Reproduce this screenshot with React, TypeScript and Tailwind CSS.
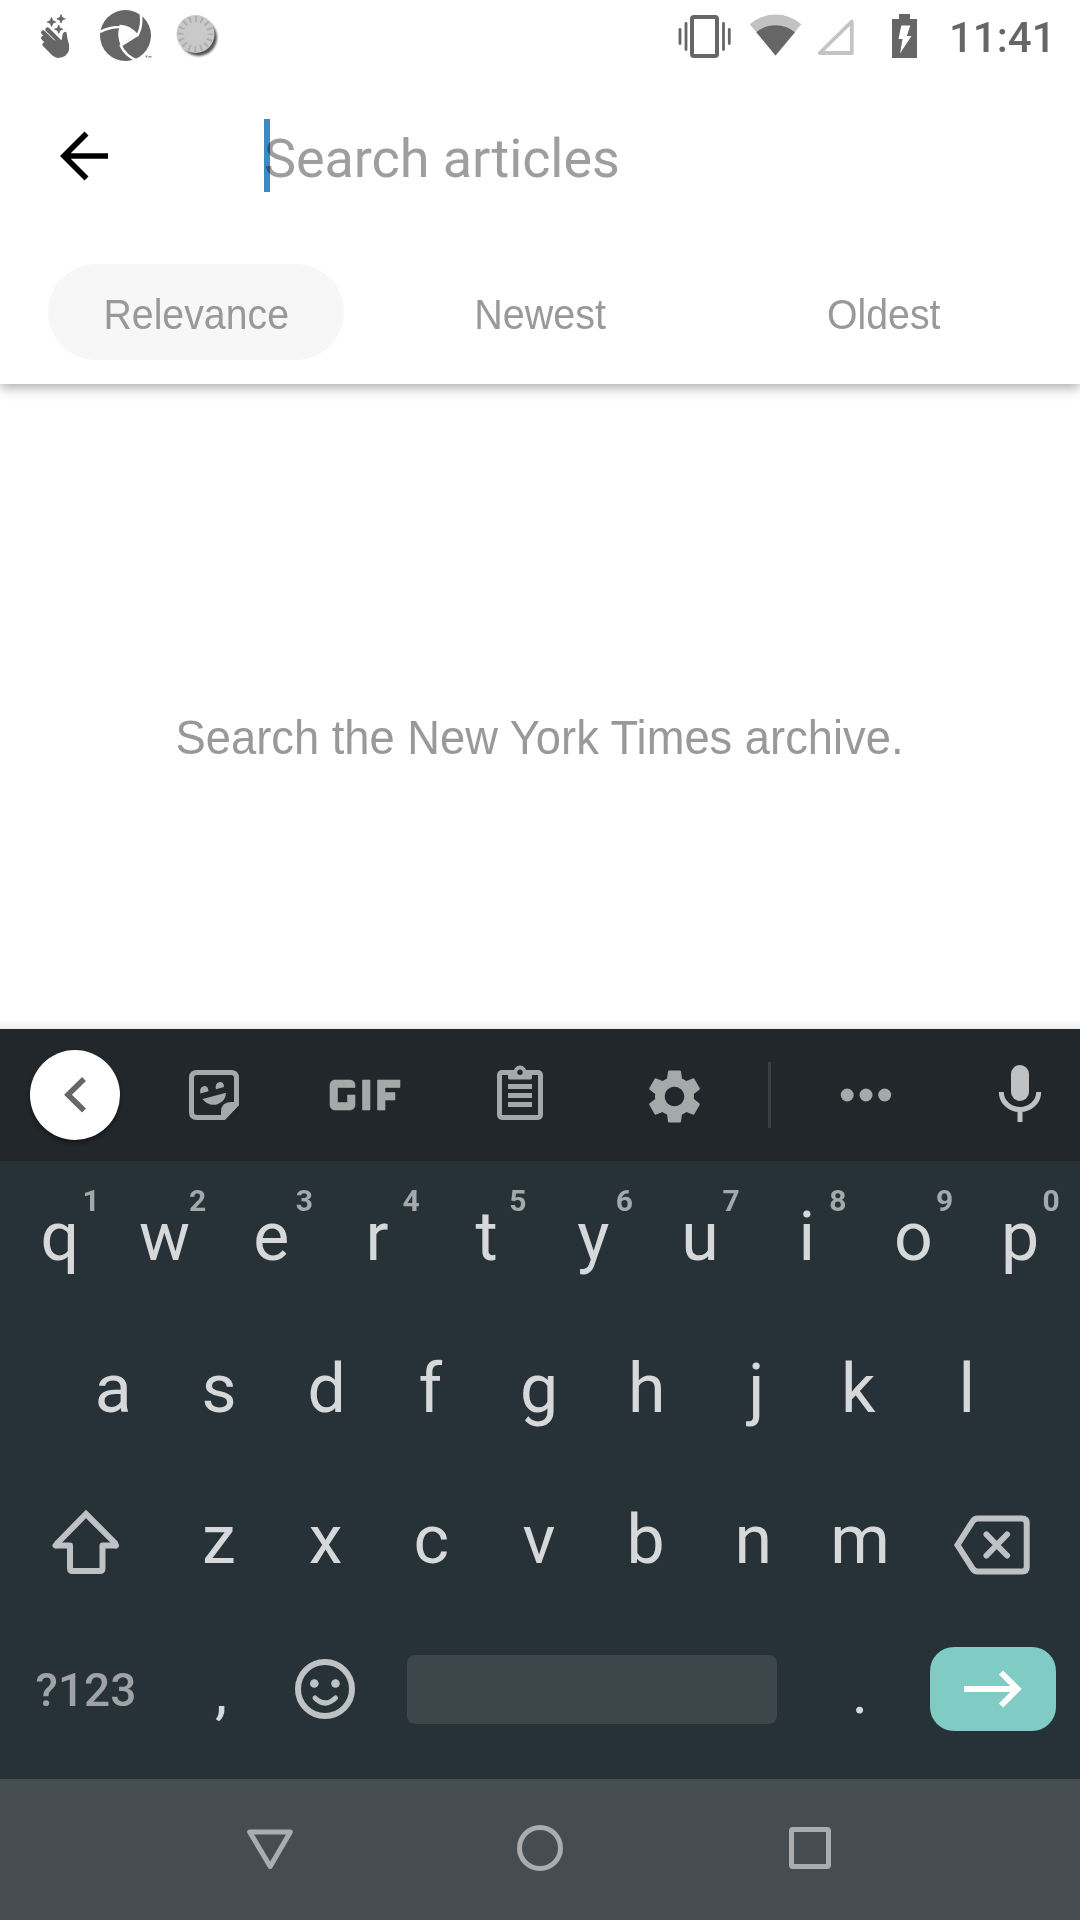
import React from 'react';
import { MdGif, MdSettings } from 'react-icons/md';

function StatusBar() {
  return (
    <div className="flex h-[72px] w-full shrink-0 items-start text-[#666]">
      {/* waving hand */}
      <svg className="ml-9 h-[72px] w-9 shrink-0" viewBox="36 0 36 72" fill="currentColor">
        <path d="M51.500 17.500l1.300 3.200l3 1.300l-3 1.300l-1.300 3.200l-1.300-3.200l-3-1.300l3-1.300z M61 14.500l1.200 3l3 1.300l-3 1.300l-1.200 3l-1.200-3l-3-1.300l3-1.300z M58.700 25l1.200 3l3 1.200l-3 1.200l-1.200 3l-1.200-3l-3-1.200l3-1.200z" stroke="currentColor" strokeWidth=".8" />
        <path d="M47.500 29.500L60 42 M43.200 32.500L57 46 M43.200 38L55 50 M44.500 44.500L54 54" stroke="currentColor" strokeWidth="4.400" strokeLinecap="round" />
        <path d="M49 39L60.500 41.500Q62.500 39 62.500 34.500Q64 30.500 66.500 32.500Q67.500 40 69 44V50Q67 57.500 58 58Q54 57.500 50 52.500L46 46z" />
      </svg>
      {/* aperture logo */}
      <svg className="ml-7 h-[72px] w-[52px] shrink-0" viewBox="100 0 52 72">
        <circle cx="125.500" cy="35.500" r="25.500" fill="currentColor" />
        <path d="M119.500 26.500Q131 26 137.500 35Q129 38 120.500 45Q116.500 35 119.500 26.500z" fill="#fff" />
        <path d="M100 32Q109 27 120 27 M119.500 26Q129 25.500 138 36 M137 36Q143 26 140.500 12 M138 34.500Q133 38 120 46 M120.500 45Q125 56 138 61" fill="none" stroke="#fff" strokeWidth="2.500" />
        <path d="M134 61L143 56L152 60V66H134z" fill="#fff" />
        <path d="M145 56h3m-1.500 0v2m2.500 0v-2l1 1l1-1v2" stroke="currentColor" strokeWidth=".6" fill="none" />
      </svg>
      {/* dial */}
      <svg className="ml-[23px] h-[72px] w-[50px] shrink-0 overflow-visible" viewBox="175 0 50 72">
        <defs>
          <filter id="soft" x="-20%" y="-20%" width="150%" height="150%"><feGaussianBlur stdDeviation="1.300" /></filter>
        </defs>
        <circle cx="198.500" cy="37.500" r="18.500" fill="#555" filter="url(#soft)" />
        <circle cx="195.500" cy="34" r="19" fill="#c9c9c9" />
        <circle cx="195.500" cy="34" r="15" fill="none" stroke="#aeaeae" strokeWidth="6" strokeDasharray="2 3.890" strokeDashoffset="1" />
      </svg>
      {/* vibrate */}
      <svg className="ml-[451px] h-[72px] w-14 shrink-0" viewBox="676 0 56 72" fill="none" stroke="currentColor">
        <rect x="692" y="17" width="25" height="39" rx="2" strokeWidth="4" />
        <path d="M680 29.500V43.500 M686 23.500V49.500 M723.500 23.500V49.500 M729.300 29.500V43.500" strokeWidth="2.800" strokeLinecap="round" />
      </svg>
      {/* wifi */}
      <svg className="ml-4 h-[72px] w-14 shrink-0" viewBox="748 0 56 72">
        <path d="M775.500 55.500L749.800 24.300Q761 14.500 775.500 14.500Q790 14.500 801.300 24.300z" fill="#c2c2c2" />
        <path d="M775.500 55.500L756.300 32.200Q764.500 25.200 775.500 25.200Q786.500 25.200 795 32.200z" fill="currentColor" />
      </svg>
      {/* no signal */}
      <svg className="ml-3 h-[72px] w-10 shrink-0" viewBox="816 0 40 72">
        <path d="M851.800 21.500V53H819.800z" fill="none" stroke="#c4c4c4" strokeWidth="3.800" strokeLinejoin="round" />
      </svg>
      {/* battery charging */}
      <svg className="ml-9 h-[72px] w-[25px] shrink-0" viewBox="892 0 25 72">
        <path d="M892 19h7v-5h11v5h7v39h-25z" fill="currentColor" />
        <path d="M901.300 25.500h9l-3.500 10.500h4.700L900 53.500L902.500 39h-4z" fill="#fff" />
      </svg>
      <span className="ml-8 mt-[2px] text-[42px] font-medium leading-[72px]">11:41</span>
    </div>
  );
}

function SearchHeader() {
  return (
    <header className="flex h-[384px] shrink-0 flex-col bg-white shadow-[0_3px_12px_rgba(0,0,0,0.36)]">
      <StatusBar />
      <div className="flex h-[168px] items-center">
        <svg className="ml-[60px] h-[50px] w-[49px]" viewBox="60 131 49 50" fill="none" stroke="#000" strokeWidth="5.600">
          <path d="M108 156H64 M86.500 133.500L64 156L86.500 178.500" />
        </svg>
        <div className="relative ml-[155px] text-[54px] leading-[72px] text-[#9e9e9e]">
          <span className="relative top-[3px] tracking-[-0.08px]">Search articles</span>
          <i className="absolute left-0 top-[-1px] h-[73px] w-1.5 bg-[#3b8bbf] mix-blend-multiply" />
        </div>
      </div>
      <nav className="mt-6 flex h-24 items-center px-12 font-['Liberation_Sans',sans-serif] text-[42px] text-[#999]">
        <button className="h-24 w-[296px] rounded-full bg-[#f7f7f7] pt-[5px]">
          <span className="inline-block scale-x-[0.935]">Relevance</span>
        </button>
        <button className="ml-12 h-24 w-[296px] pt-[5px]">
          <span className="inline-block scale-x-[0.94]">Newest</span>
        </button>
        <button className="ml-12 h-24 w-[296px] pt-[5px]">
          <span className="inline-block scale-x-[0.935]">Oldest</span>
        </button>
      </nav>
    </header>
  );
}

function Toolbar() {
  return (
    <div className="flex h-[132px] shrink-0 items-center bg-[#22272b] text-[#a5a9aa]">
      <div className="ml-[30px] flex h-[90px] w-[90px] items-center justify-center rounded-full bg-white shadow-[0_3px_4px_rgba(0,0,0,0.4)]">
        <svg className="h-10 w-[30px]" viewBox="60.500 1075 30 40" fill="none" stroke="#666" strokeWidth="5.500">
          <path d="M84.500 1079L68.500 1094.700L84.500 1110.500" />
        </svg>
      </div>
      {/* sticker */}
      <svg className="ml-[69px] h-[50px] w-[50px]" viewBox="0 0 50 50">
        <path d="M8 2.500H42Q47.500 2.500 47.500 8V34L34 47.500H8Q2.500 47.500 2.500 42V8Q2.500 2.500 8 2.500z" fill="none" stroke="currentColor" strokeWidth="5" />
        <path d="M50 32V35L36 50H32V42Q32 32 42 32z" fill="currentColor" />
        <path d="M11.500 23.500Q10 17.500 14.500 16.200Q19 15.500 19.500 21.200z M27 19.300Q25.500 13.200 30.500 12Q35 11.500 35 17z M13.500 29L37 22.800Q36.500 31.500 28.500 34.300Q19 36.500 13.500 29z" fill="currentColor" />
      </svg>
      <MdGif className="ml-[66px] h-[120px] w-[120px] [&>path:last-child]:stroke-current [&>path:last-child]:[stroke-width:0.12px]" />
      {/* clipboard */}
      <svg className="ml-[72px] h-[60px] w-[46px]" viewBox="497 1065 46 60" fill="none" stroke="currentColor">
        <rect x="499.500" y="1072.500" width="41" height="45" rx="2.500" strokeWidth="5" />
        <path d="M508 1074H532V1078Q532 1079.500 530 1079.500H510Q508 1079.500 508 1078z M513 1074A7 8.500 0 0 1 527 1074z" fill="currentColor" stroke="none" />
        <circle cx="520" cy="1072.300" r="2.700" fill="#22272b" stroke="none" />
        <path d="M508 1086.500H532 M508 1095.500H532 M508 1104.500H532" strokeWidth="5" />
      </svg>
      <MdSettings className="ml-[98.500px] mt-[3px] h-[65px] w-[65px]" />
      <div className="ml-[61.500px] h-[66px] w-[3px] bg-[#3b4043]" />
      <svg className="ml-[69px] h-4 w-[52px]" viewBox="840 1087.500 52 16" fill="currentColor">
        <circle cx="847.200" cy="1095.500" r="6.500" />
        <circle cx="866" cy="1095.500" r="6.500" />
        <circle cx="884.700" cy="1095.500" r="6.500" />
      </svg>
      {/* microphone */}
      <svg className="ml-[107px] h-[60px] w-[42px] text-[#bfc1c2]" viewBox="999 1065 42 60">
        <rect x="1011" y="1065" width="18" height="36" rx="9" fill="currentColor" />
        <path d="M1001.300 1092A18.700 17.500 0 0 0 1038.700 1092 M1020 1110V1122" fill="none" stroke="currentColor" strokeWidth="5" />
      </svg>
    </div>
  );
}

// Optical centring of single glyphs inside their key.
const nudges: Record<string, string> = {
  w: '-left-[2px]',
  e: '-left-[2px]',
  r: '-left-[3px]',
  s: '-left-[1px]',
  f: '-left-[3px]',
  g: '-left-[1px]',
  j: 'left-[3px]',
  k: '-left-[2px]',
  c: '-left-[1px]',
  m: 'left-[1px]',
  n: 'left-[1px]',
};

function Key({ label, hint }: { label: string; hint?: string }) {
  return (
    <button className="relative h-full w-[106.700px] shrink-0 text-center text-[68px] leading-[152.500px] text-[#d6d8d9]">
      <span className={'relative ' + (nudges[label] ?? 'left-0')}>{label}</span>
      {hint && (
        <span className="absolute left-[74.500px] top-[24px] w-5 text-center text-[30px] font-bold leading-8 text-[#a4a9ab]">
          {hint}
        </span>
      )}
    </button>
  );
}

function Keyboard() {
  return (
    <section className="flex h-[618px] shrink-0 flex-col bg-[#273238]">
      <div className="flex h-[151.500px] pl-[6.500px]">
        {'qwertyuiop'.split('').map((c, i) => (
          <Key key={c} label={c} hint={String((i + 1) % 10)} />
        ))}
      </div>
      <div className="flex h-[151.500px] pl-[60px]">
        {'asdfghjkl'.split('').map((c) => (
          <Key key={c} label={c} />
        ))}
      </div>
      <div className="flex h-[151.500px] items-center text-[#bfc2c5]">
        <svg className="ml-[50px] h-[72px] w-[72px] shrink-0" viewBox="50 1504 72 72" fill="none" stroke="currentColor" strokeWidth="6" strokeLinejoin="round">
          <path strokeLinejoin="miter" d="M56.500 1544L86 1514L116 1544" />
          <path d="M56 1545.500H70V1568Q70 1571 72.500 1571H100Q102.500 1571 102.500 1568V1545.500H116.500" />
          <path d="M55.500 1545.500L57 1544 M116 1545.500L115 1544" strokeLinecap="round" />
        </svg>
        <div className="ml-[43.500px] flex h-full">
          {'zxcvbnm'.split('').map((c) => (
            <Key key={c} label={c} />
          ))}
        </div>
        <svg className="ml-[41px] mt-1 h-[66px] w-[78px] shrink-0" viewBox="953 1509 78 66" fill="none" stroke="currentColor" strokeWidth="6" strokeLinejoin="round">
          <path strokeLinejoin="miter" d="M957.500 1545L972.500 1521.500Q974.500 1518.500 977.500 1518.500H1022Q1026.700 1518.500 1026.700 1523V1567Q1026.700 1571.500 1022 1571.500H977.500Q974.500 1571.500 972.500 1568.500z" />
          <path strokeLinecap="round" d="M986.500 1534.500L1007 1555.500 M1007 1534.500L986.500 1555.500" />
        </svg>
      </div>
      <div className="flex h-[146px] items-center">
        <button className="w-[166px] pl-1.5 pt-1 text-center text-[46px] font-medium text-[#9fa3a6]">?123</button>
        <button className="h-full w-[106px] pl-1 text-center text-[62px] leading-[152px] text-[#d6d8d9]">,</button>
        <svg className="ml-[23px] h-[60px] w-[60px]" viewBox="295 1658 60 60" fill="none" stroke="#bfc2c5" strokeWidth="6">
          <circle cx="325" cy="1688" r="27" />
          <path d="M315 1697Q325 1707 335.500 1697" strokeWidth="5" strokeLinecap="round" />
          <circle cx="314.300" cy="1682.500" r="4.300" fill="#bfc2c5" stroke="none" />
          <circle cx="335.500" cy="1682.500" r="4.300" fill="#bfc2c5" stroke="none" />
        </svg>
        <div className="ml-[52px] mt-px h-[69px] w-[370px] rounded-lg bg-[#3c464b]" />
        <button className="ml-[29px] h-full w-[106px] pl-0.5 text-center text-[62px] leading-[152px] text-[#d6d8d9]">.</button>
        <div className="ml-[18px] flex h-[84px] w-[126px] items-center justify-center rounded-3xl bg-[#80cbc4]">
          <svg className="h-10 w-[60px]" viewBox="963 1669 60 40" fill="none" stroke="#fff" strokeWidth="6">
            <path d="M964 1689H1016 M1001 1672.500L1017.500 1689L1001 1705.500" />
          </svg>
        </div>
      </div>
    </section>
  );
}

function NavigationBar() {
  return (
    <div className="flex h-[141px] items-center bg-[#454d52] text-[#a9adaf]">
      <svg className="ml-[246px] h-12 w-12" viewBox="246 1825 48 48" fill="none" stroke="currentColor" strokeWidth="5" strokeLinejoin="round">
        <path d="M249.700 1831H290.300L270.200 1865.500z" />
      </svg>
      <div className="ml-[223px] mt-[-3px] h-[46px] w-[46px] rounded-full border-[5px] border-current" />
      <div className="ml-[226px] mt-[-3px] h-[42px] w-[42px] rounded border-[5px] border-current" />
    </div>
  );
}

export default function App() {
  return (
    <div className="flex h-[1920px] w-[1080px] flex-col overflow-hidden bg-white font-[Roboto,sans-serif]">
      <SearchHeader />
      <main className="flex h-[645px] shrink-0 flex-col items-center">
        <p className="mt-[323px] scale-x-[0.925] whitespace-nowrap font-['Liberation_Sans',sans-serif] text-[49px] leading-[60px] text-[#999]">
          Search the New York Times archive.
        </p>
        <div className="mt-auto h-[9px] w-full bg-linear-to-b from-white to-[#ececec]" />
      </main>
      <Toolbar />
      <Keyboard />
      <NavigationBar />
    </div>
  );
}
